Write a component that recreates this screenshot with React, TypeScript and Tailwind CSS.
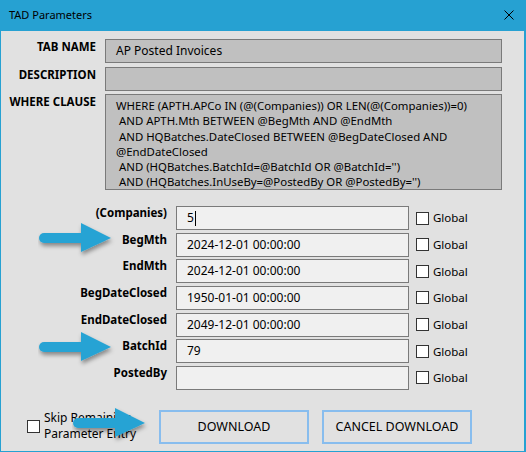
const params = [
  { label: "(Companies)", value: "5", caret: true },
  { label: "BegMth", value: "2024-12-01 00:00:00" },
  { label: "EndMth", value: "2024-12-01 00:00:00" },
  { label: "BegDateClosed", value: "1950-01-01 00:00:00" },
  { label: "EndDateClosed", value: "2049-12-01 00:00:00" },
  { label: "BatchId", value: "79" },
  { label: "PostedBy", value: "" },
];

const whereLines = [
  "WHERE (APTH.APCo IN (@(Companies)) OR LEN(@(Companies))=0)",
  " AND APTH.Mth BETWEEN @BegMth AND @EndMth",
  " AND HQBatches.DateClosed BETWEEN @BegDateClosed AND",
  "@EndDateClosed",
  " AND (HQBatches.BatchId=@BatchId OR @BatchId='')",
  " AND (HQBatches.InUseBy=@PostedBy OR @PostedBy='')",
];

function Arrow({ className, shaft }: { className: string; shaft: number }) {
  const w = shaft + 30;
  return (
    <svg className={className} width={w + 6} height={40} viewBox={`0 0 ${w + 6} 40`}>
      <defs>
        <filter id="sh" x="-20%" y="-30%" width="140%" height="170%">
          <feDropShadow dx="1" dy="3" stdDeviation="2" floodColor="#000" floodOpacity="0.4" />
        </filter>
      </defs>
      <g filter="url(#sh)">
        <rect x={1} y={11} width={shaft + 4} height={10} rx={5} fill="#27a3d4" />
        <polygon points={`${shaft},1 ${w},16 ${shaft},30`} fill="#27a3d4" />
      </g>
    </svg>
  );
}

function Check() {
  return <div className="w-[13px] h-[13px] bg-white border border-[#333] shrink-0" />;
}

export default function App() {
  return (
    <div
      className="relative w-[526px] h-[452px] bg-[#e1e1e1] border-l border-r-2 border-b border-[#26a1d2] text-[11.5px] text-black overflow-hidden"
      style={{ fontFamily: '"Noto Sans", "Open Sans", sans-serif' }}
    >
      {/* title bar */}
      <div className="h-[31px] bg-[#26a1d2] flex items-center justify-between pl-[8px] pr-[10px]">
        <span className="text-[11px]">TAD Parameters</span>
        <svg width="10" height="10" viewBox="0 0 10 10" className="mt-[-1px]">
          <path d="M0.5 0.5 L9.5 9.5 M9.5 0.5 L0.5 9.5" stroke="#000" strokeWidth="1" />
        </svg>
      </div>

      {/* tab info */}
      <div className="grid grid-cols-[95px_397px] gap-x-[9px] gap-y-[4px] mt-[8px]">
        <div className="text-right font-bold leading-[16px]">TAB NAME</div>
        <div className="h-[24px] bg-[#c0c0c0] border border-[#7a7a7a] pl-[10px] flex items-center text-[12px]">
          AP Posted Invoices
        </div>
        <div className="text-right font-bold leading-[16px]">DESCRIPTION</div>
        <div className="h-[24px] bg-[#c0c0c0] border border-[#7a7a7a]" />
        <div className="text-right font-bold leading-[16px] -mt-[1px]">WHERE CLAUSE</div>
        <div className="h-[96px] bg-[#c0c0c0] border border-[#7a7a7a] pl-[10px] pt-[3px] text-[11.4px] leading-[15.3px] whitespace-pre -mt-[1px]">
          {whereLines.map((l) => (
            <div key={l}>{l}</div>
          ))}
        </div>
      </div>

      {/* parameters */}
      <div className="flex flex-col gap-[2.67px] mt-[16px]">
        {params.map((p) => (
          <div key={p.label} className="flex h-[24px]">
            <div className="w-[166px] text-right font-bold leading-[16px] -mt-[1px]">{p.label}</div>
            <div className="ml-[9px] w-[233px] h-[24px] bg-[#f0f0f0] border border-[#7a7a7a] pl-[10px] flex items-center text-[12px]">
              {p.value}
              {p.caret && <span className="inline-block w-px h-[15px] bg-black ml-[1px]" />}
            </div>
            <div className="flex items-center ml-[7px] gap-[4px]">
              <Check />
              <span>Global</span>
            </div>
          </div>
        ))}
      </div>

      {/* bottom */}
      <div className="flex items-center mt-[20px]">
        <div className="flex items-center ml-[26px] w-[131px]">
          <Check />
          <div className="ml-[4px] leading-[16px] -mt-[2px] text-[12px]">
            <div>Skip Remaining</div>
            <div>Parameter Entry</div>
          </div>
        </div>
        <button className="ml-[1px] w-[150px] h-[34px] border-2 border-[#88bdee] bg-[#e1e1e1] text-[12.5px]">
          DOWNLOAD
        </button>
        <button className="ml-[13px] w-[150px] h-[34px] border-2 border-[#88bdee] bg-[#e1e1e1] text-[12.5px]">
          CANCEL DOWNLOAD
        </button>
      </div>

      {/* annotation arrows */}
      <Arrow className="absolute left-[37px] top-[222px]" shaft={43} />
      <Arrow className="absolute left-[37px] top-[331px]" shaft={43} />
      <Arrow className="absolute left-[71px] top-[407px]" shaft={43} />
    </div>
  );
}
